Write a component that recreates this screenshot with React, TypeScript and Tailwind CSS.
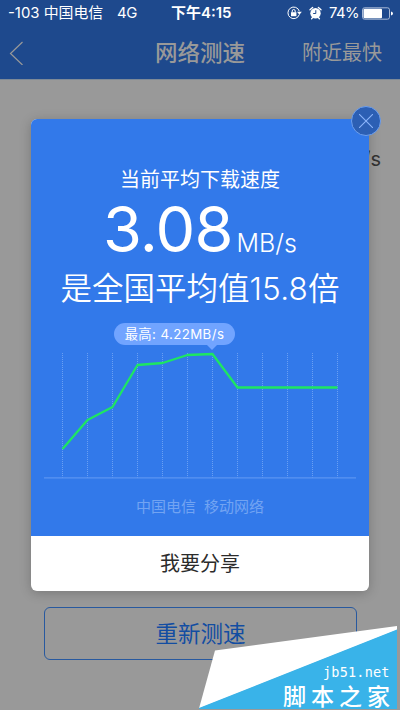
import React from 'react';

const speeds = [449, 420, 407, 365, 363, 355, 354, 387.5, 387.5, 387.5, 387.5, 387.5];

const StatusBar: React.FC = () => (
    <div className="flex h-[26px] items-center text-[14.9px] leading-[26px] text-white whitespace-nowrap">
        <span className="ml-2 w-[109px]">-103 中国电信</span>
        <span className="w-[54px] tracking-[-0.4px]">4G</span>
        <span className="w-[116px] font-semibold text-[15px]">下午4:15</span>
        <svg className="h-[14px] w-[15px]" viewBox="0 0 15 14" fill="none" stroke="#fff">
            <path d="M12.3 8.5A5.8 5.8 0 1 1 12.3 5.2" />
            <path d="M10 5.8h4.8l-2.4 2.9z" fill="#fff" stroke="none" />
            <rect x="4" y="6.2" width="5.4" height="4" fill="#fff" stroke="none" />
            <path d="M5.2 6.4V5a1.5 1.5 0 0 1 3 0v1.4" />
        </svg>
        <svg className="ml-[7px] h-[14px] w-[13px]" viewBox="0 0 13 14">
            <circle cx="6.5" cy="7.2" r="5.2" fill="#fff" />
            <path d="M1 3.7L3.6 1.5M12 3.7L9.4 1.5M2.6 12.7l1.4-1.6M10.4 12.7L9 11.1" stroke="#fff" strokeWidth="1.4" strokeLinecap="round" />
            <path d="M6.8 4.2v3.3H4.2" stroke="#1e498d" fill="none" />
        </svg>
        <span className="ml-[7px] w-[33px] text-[14.8px] tracking-[-0.5px]">74%</span>
        <svg className="h-[13px] w-[32px]" viewBox="0 0 32 13">
            <rect x="0.5" y="0.8" width="27" height="11.4" rx="2" fill="none" stroke="#a9bad6" />
            <rect x="1.5" y="1.8" width="18.5" height="9.4" rx="1" fill="#fff" />
            <path d="M29 4.5q2 .5 2 2t-2 2z" fill="#fff" />
        </svg>
    </div>
);

const Header: React.FC = () => (
    <header className="h-[80px] border-b border-[#7d8997] bg-[#1e498d]">
        <StatusBar />
        <div className="flex h-[53px] items-center text-[#999999] whitespace-nowrap">
            <svg className="ml-[9px] h-[24px] w-[15px]" viewBox="0 0 15 24" fill="none" stroke="currentColor" strokeWidth="1.2">
                <path d="M13.5 1L1.5 12.5L13.5 24" />
            </svg>
            <h1 className="ml-[131px] w-[147px] text-[22.5px] font-medium leading-[30px]">网络测速</h1>
            <span className="text-[20px] leading-[30px]">附近最快</span>
        </div>
    </header>
);

const SpeedChart: React.FC = () => {
    const points = speeds.map((y, i) => `${18.5 + i * 25},${y - 350}`).join(' ');
    return (
        <svg className="h-[132px] w-[312px]" viewBox="0 0 312 132" fill="none">
            {speeds.map((_, i) => (
                <path key={i} d={`M${18.5 + i * 25} 3V128`} stroke="#6a9ff3" strokeDasharray="1 1" />
            ))}
            <path d="M0 127.8H312" stroke="#5b95f2" strokeWidth="1.3" />
            <polyline points={points} stroke="#1ee662" strokeWidth="2.3" strokeLinejoin="round" />
        </svg>
    );
};

const ResultModal: React.FC = () => (
    <div className="absolute left-[31px] top-[119px] h-[472px] w-[338px] rounded-md bg-white text-white shadow-[0_2px_12px_rgba(0,0,0,0.22)]">
        <button className="absolute -right-[12px] -top-[13px] flex h-[30px] w-[30px] items-center justify-center rounded-full border-[1.5px] border-[#6d9fee] bg-[#2c5fb4]">
            <svg className="h-[14px] w-[14px]" viewBox="0 0 14 14" stroke="#8bb4fa" strokeWidth="1.1">
                <path d="M0 0L14 14M14 0L0 14" />
            </svg>
        </button>
        <div className="flex h-[417px] flex-col items-center rounded-t-md bg-[#3279ea] whitespace-nowrap">
            <p className="mt-[46px] text-[20px] leading-[30px]">当前平均下载速度</p>
            <div className="mt-[1px] flex h-[66px] items-baseline leading-[66px]">
                <span className="text-[63px] font-[370] tracking-[-0.8px]">3.08</span>
                <span className="ml-[4px] text-[25px] font-[350]">MB/s</span>
            </div>
            <p className="mt-[5px] text-[31.5px] font-[350] leading-[44px]">是全国平均值<span className="tracking-[0.2px]">15.8</span>倍</p>
            <div className="relative mt-[12px] mr-[51px] h-[22px] w-[121px] rounded-full bg-[#71a4ff] text-center text-[13.3px] font-[370] leading-[23px] tracking-[0.4px]">
                最高: 4.22MB/s
                <svg className="absolute left-[92px] top-[21px] h-[6px] w-[12px]" viewBox="0 0 12 6">
                    <path d="M0 0h12L6 6z" fill="#71a4ff" />
                </svg>
            </div>
            <div className="mt-[5px] h-[132px]">
                <SpeedChart />
            </div>
            <p className="mt-[13px] flex gap-[8px] text-[15px] leading-[24px] text-[#72a4f2]">
                <span>中国电信</span>
                <span>移动网络</span>
            </p>
        </div>
        <button className="h-[55px] w-full text-center text-[20px] text-[#2b2b2b]">我要分享</button>
    </div>
);

const Watermark: React.FC = () => (
    <div className="absolute bottom-0 right-[3px] h-[84px] w-[198px] text-white whitespace-nowrap">
        <svg className="absolute inset-0 h-full w-full" viewBox="0 0 198 84">
            <path d="M16 24.5L198 0V4L0 82.5z" fill="#fff" />
            <path d="M198 3.5V83H0v-1z" fill="#39b3e9" />
        </svg>
        <span className="absolute left-[124px] top-[37px] font-['DejaVu_Sans_Mono'] text-[13.5px] leading-[18px] tracking-[0.2px]">jb51.net</span>
        <span className="absolute left-[84px] top-[59px] text-[23px] font-medium leading-[25px] tracking-[5px]">脚本之家</span>
    </div>
);

const App: React.FC = () => (
    <div className="relative h-[710px] w-[400px] overflow-hidden bg-[#999999] font-[Inter,'Noto_Sans_CJK_SC',sans-serif]">
        <Header />
        <main className="flex h-[630px] flex-col px-[44px]">
            <div className="-mr-[25px] mt-[65px] self-end text-[20px] leading-[28px] text-[#333333]">MB/s</div>
            <button className="mt-[434px] h-[53px] w-[313px] shrink-0 rounded-md border border-[#28599f] text-[22.5px] text-[#124da2]">重新测速</button>
        </main>
        <ResultModal />
        <Watermark />
    </div>
);

export default App;
